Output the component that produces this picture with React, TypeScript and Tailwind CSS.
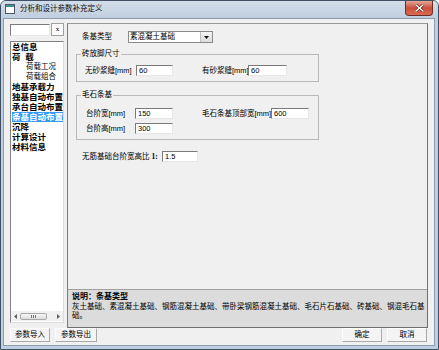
import React from "react";

const treeItems = [
  { t: "总信息", bold: true },
  { t: "荷  载", bold: true },
  { t: "荷载工况", sub: true },
  { t: "荷载组合", sub: true },
  { t: "地基承载力", bold: true },
  { t: "独基自动布置", bold: true },
  { t: "承台自动布置", bold: true },
  { t: "条基自动布置", bold: true, sel: true },
  { t: "沉降", bold: true },
  { t: "计算设计", bold: true },
  { t: "材料信息", bold: true },
];

function Field({ value, w }: { value: string; w: string }) {
  return (
    <div
      className={`${w} h-[11px] shrink-0 bg-white border border-t-[#7a7a7a] border-l-[#7a7a7a] border-b-[#e6e6e6] border-r-[#e6e6e6] flex items-center pl-[2px] text-[7.5px] leading-none`}
    >
      {value}
    </div>
  );
}

function Label({ text, w }: { text: string; w: string }) {
  return <div className={`${w} shrink-0 text-[7.5px] leading-none whitespace-nowrap`}>{text}</div>;
}

function Btn({ label, w }: { label: string; w: string }) {
  return (
    <div
      className={`${w} h-[14px] flex items-center justify-center bg-[#f4f4f4] border border-[#a9a9a9] border-t-[#fdfdfd] border-l-[#fdfdfd] text-[7.5px] leading-none`}
    >
      {label}
    </div>
  );
}

export default function App() {
  return (
    <div className="w-[439px] h-[350px] bg-white font-['Liberation_Sans','Noto_Sans_CJK_SC',sans-serif] text-black">
      <div className="w-[439px] h-[350px] flex flex-col rounded-t-[6px] border border-[#3f5064] bg-[#bfcee0]">
        {/* title bar */}
        <div className="h-[18px] flex items-start bg-linear-to-b from-[#d2dde9] to-[#bfcddd] rounded-t-[5px]">
          <svg className="ml-[4px] mt-[3px]" width="10" height="10" viewBox="0 0 10 10">
            <rect x="0.5" y="0.5" width="9" height="9" fill="#ffffff" stroke="#4d5968" />
            <rect x="1" y="1" width="8" height="2" fill="#3f8f8a" />
          </svg>
          <div className="ml-[5px] mt-[3px] text-[7.5px] leading-[10px] text-[#111]">分析和设计参数补充定义</div>
          <div className="flex-1" />
          <div className="mr-[5px] w-[28px] h-[15px] flex items-center justify-center rounded-b-[4px] border border-t-0 border-[#6e2d24] bg-linear-to-b from-[#e7a597] via-[#c84f3b] to-[#d86a52]">
            <svg width="9" height="8" viewBox="0 0 9 8">
              <path d="M1 1 L8 7 M8 1 L1 7" stroke="#5a2019" strokeWidth="2.6" strokeLinecap="square" />
              <path d="M1 1 L8 7 M8 1 L1 7" stroke="#ffffff" strokeWidth="1.4" strokeLinecap="square" />
            </svg>
          </div>
        </div>

        {/* client */}
        <div className="ml-[3px] mr-[4px] h-[326px] bg-[#f0f0f0] flex flex-col pt-[4px] pl-[6px] pr-[6px] shadow-[0_0_0_1px_#8d9db1]">
          <div className="h-[305px] flex">
            {/* left column */}
            <div className="w-[54px] flex flex-col">
              <div className="h-[13px] flex items-start">
                <div className="w-[40px] h-[12px] mt-[1px] bg-white border border-t-[#7a7a7a] border-l-[#7a7a7a] border-b-[#e6e6e6] border-r-[#e6e6e6]" />
                <div className="ml-[1px] w-[13px] h-[13px] flex items-center justify-center bg-[#fafafa] border border-[#a0a0a0] text-[7px] leading-none font-['Liberation_Serif',serif]">
                  x
                </div>
              </div>
              <div className="mt-[5px] h-[282px] flex flex-col bg-white border border-[#828282] border-b-[#dcdcdc] border-r-[#dcdcdc] overflow-hidden">
                <div className="flex-1 flex flex-col">
                  {treeItems.map((it) => (
                    <div
                      key={it.t}
                      className={`h-[10px] flex items-center whitespace-nowrap leading-none ${
                        it.sub ? "pl-[15px] text-[7.5px]" : "pl-[1px] text-[8.5px] font-bold"
                      }`}
                    >
                      <span className={it.sel ? "bg-[#3399ff] text-white pr-[6px] h-[10px] flex items-center" : ""}>
                        {it.t.replace("  ", "\u00a0\u00a0")}
                      </span>
                    </div>
                  ))}
                </div>
                {/* horizontal scrollbar */}
                <div className="h-[10px] flex items-center bg-[#f0f0f0] mb-[1px]">
                  <div className="w-[9px] flex justify-center">
                    <svg width="3" height="5" viewBox="0 0 3 5">
                      <path d="M3 0 L0 2.5 L3 5 Z" fill="#606060" />
                    </svg>
                  </div>
                  <div className="w-[27px] h-[7px] flex items-center justify-center rounded-[2px] border border-[#a8a8a8] bg-linear-to-b from-[#f7f7f7] to-[#dedede]">
                    <div className="flex gap-[1px]">
                      <div className="w-[1px] h-[3px] bg-[#777]" />
                      <div className="w-[1px] h-[3px] bg-[#777]" />
                      <div className="w-[1px] h-[3px] bg-[#777]" />
                    </div>
                  </div>
                  <div className="flex-1" />
                  <div className="w-[9px] flex justify-center">
                    <svg width="3" height="5" viewBox="0 0 3 5">
                      <path d="M0 0 L3 2.5 L0 5 Z" fill="#606060" />
                    </svg>
                  </div>
                </div>
              </div>
            </div>

            {/* right panel */}
            <div className="ml-[3px] w-[361px] h-[305px] flex flex-col border border-[#6f6f6f] border-t-[#9a9a9a] border-l-[#7a7a7a]">
              <div className="h-[265px] flex flex-col">
                <div className="mt-[7px] h-[12px] flex items-center pl-[14px]">
                  <Label text="条基类型" w="w-[46px]" />
                  <div className="w-[85px] h-[12px] flex items-center bg-white border border-[#8a8a8a]">
                    <div className="flex-1 pl-[1px] text-[7.5px] leading-none">素混凝土基础</div>
                    <div className="w-[12px] h-[10px] flex items-center justify-center bg-linear-to-b from-[#f5f5f5] to-[#dcdcdc] border-l border-[#c0c0c0]">
                      <svg width="5" height="3" viewBox="0 0 5 3">
                        <path d="M0 0 L5 0 L2.5 3 Z" fill="#111" />
                      </svg>
                    </div>
                  </div>
                </div>

                <fieldset className="mt-[6px] ml-[8px] w-[243px] border border-[#b9b9b9] pt-[6px] pb-[5px]">
                  <legend className="ml-[4px] px-[1px] h-[10px] text-[7.5px] leading-[10px]">砖放脚尺寸</legend>
                  <div className="h-[11px] flex items-center pl-[8px]">
                    <Label text="无砂浆缝[mm]" w="w-[51px]" />
                    <Field value="60" w="w-[37px]" />
                    <div className="w-[29px]" />
                    <Label text="有砂浆缝[mm]" w="w-[46px]" />
                    <Field value="60" w="w-[39px]" />
                  </div>
                </fieldset>

                <fieldset className="mt-[8px] ml-[8px] w-[243px] border border-[#b9b9b9] pt-[8px] pb-[5px]">
                  <legend className="ml-[4px] px-[1px] h-[10px] text-[7.5px] leading-[10px]">毛石条基</legend>
                  <div className="h-[11px] flex items-center pl-[9px]">
                    <Label text="台阶宽[mm]" w="w-[49px]" />
                    <Field value="150" w="w-[38px]" />
                    <div className="w-[29px]" />
                    <Label text="毛石条基顶部宽[mm]" w="w-[69px]" />
                    <Field value="600" w="w-[38px]" />
                  </div>
                  <div className="mt-[4px] h-[11px] flex items-center pl-[9px]">
                    <Label text="台阶高[mm]" w="w-[49px]" />
                    <Field value="300" w="w-[38px]" />
                  </div>
                </fieldset>

                <div className="mt-[11px] h-[11px] flex items-center pl-[14px]">
                  <div className="w-[80px] shrink-0 text-[7.5px] leading-none whitespace-nowrap">
                    无筋基础台阶宽高比 <span className="font-bold font-['Liberation_Serif',serif]">1:</span>
                  </div>
                  <Field value="1.5" w="w-[36px]" />
                </div>
              </div>

              <div className="h-[38px] border-t border-[#a0a0a0] bg-[#dcdcdc] pl-[4px] pt-[2px]">
                <div className="h-[10px] text-[8px] leading-[10px] font-bold">说明：条基类型</div>
                <div className="w-[356px] text-[7.5px] leading-[9px]">
                  灰土基础、素混凝土基础、钢筋混凝土基础、带卧梁钢筋混凝土基础、毛石片石基础、砖基础、钢混毛石基础。
                </div>
              </div>
            </div>
          </div>

          {/* bottom buttons */}
          <div className="h-[14px] flex items-center">
            <Btn label="参数导入" w="w-[40px]" />
            <div className="w-[5px]" />
            <Btn label="参数导出" w="w-[42px]" />
            <div className="flex-1" />
            <Btn label="确定" w="w-[40px]" />
            <div className="w-[5px]" />
            <Btn label="取消" w="w-[40px]" />
            <div className="w-[1px]" />
          </div>
        </div>
      </div>
    </div>
  );
}
